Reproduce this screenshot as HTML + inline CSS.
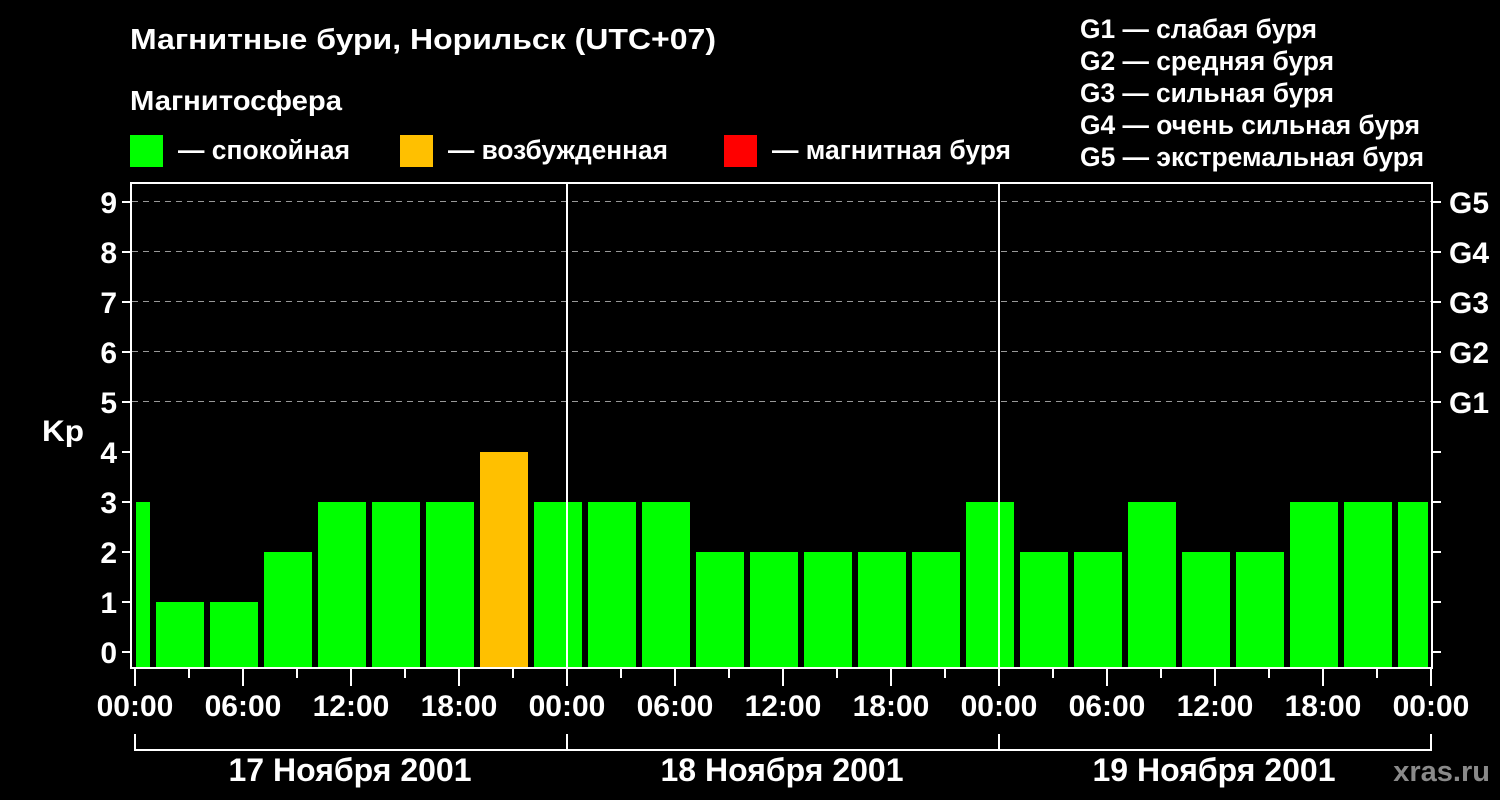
<!DOCTYPE html>
<html><head><meta charset="utf-8"><style>html,body{margin:0;padding:0;background:#000;}svg{display:block}</style></head><body>
<svg width="1500" height="800" viewBox="0 0 1500 800" xmlns="http://www.w3.org/2000/svg" font-family="Liberation Sans, Arial, sans-serif" font-weight="bold" fill="#fff">
<rect width="1500" height="800" fill="#000"/>
<text x="130" y="49" font-size="29" textLength="586" lengthAdjust="spacingAndGlyphs">Магнитные бури, Норильск (UTC+07)</text>
<text x="130" y="110" font-size="28" textLength="212" lengthAdjust="spacingAndGlyphs">Магнитосфера</text>
<rect x="130" y="135" width="33" height="32" fill="#00ff00"/>
<text x="178" y="159" font-size="27" textLength="172" lengthAdjust="spacingAndGlyphs">— спокойная</text>
<rect x="400" y="135" width="33" height="32" fill="#ffc000"/>
<text x="448" y="159" font-size="27" textLength="220" lengthAdjust="spacingAndGlyphs">— возбужденная</text>
<rect x="724" y="135" width="33" height="32" fill="#ff0000"/>
<text x="772" y="159" font-size="27" textLength="239" lengthAdjust="spacingAndGlyphs">— магнитная буря</text>
<g font-size="27">
<text x="1080" y="38" textLength="237" lengthAdjust="spacingAndGlyphs">G1 — слабая буря</text>
<text x="1080" y="70" textLength="254" lengthAdjust="spacingAndGlyphs">G2 — средняя буря</text>
<text x="1080" y="102" textLength="254" lengthAdjust="spacingAndGlyphs">G3 — сильная буря</text>
<text x="1080" y="134" textLength="340" lengthAdjust="spacingAndGlyphs">G4 — очень сильная буря</text>
<text x="1080" y="166" textLength="344" lengthAdjust="spacingAndGlyphs">G5 — экстремальная буря</text>
</g>
<g stroke="#999" stroke-width="1" stroke-dasharray="6,5">
<line x1="132" y1="201.5" x2="1431" y2="201.5"/>
<line x1="132" y1="251.5" x2="1431" y2="251.5"/>
<line x1="132" y1="301.5" x2="1431" y2="301.5"/>
<line x1="132" y1="351.5" x2="1431" y2="351.5"/>
<line x1="132" y1="401.5" x2="1431" y2="401.5"/>
</g>
<g fill="#00ff00">
<rect x="136" y="502" width="14" height="166"/>
<rect x="156" y="602" width="48" height="66"/>
<rect x="210" y="602" width="48" height="66"/>
<rect x="264" y="552" width="48" height="116"/>
<rect x="318" y="502" width="48" height="166"/>
<rect x="372" y="502" width="48" height="166"/>
<rect x="426" y="502" width="48" height="166"/>
<rect x="480" y="452" width="48" height="216" fill="#ffc000"/>
<rect x="534" y="502" width="48" height="166"/>
<rect x="588" y="502" width="48" height="166"/>
<rect x="642" y="502" width="48" height="166"/>
<rect x="696" y="552" width="48" height="116"/>
<rect x="750" y="552" width="48" height="116"/>
<rect x="804" y="552" width="48" height="116"/>
<rect x="858" y="552" width="48" height="116"/>
<rect x="912" y="552" width="48" height="116"/>
<rect x="966" y="502" width="48" height="166"/>
<rect x="1020" y="552" width="48" height="116"/>
<rect x="1074" y="552" width="48" height="116"/>
<rect x="1128" y="502" width="48" height="166"/>
<rect x="1182" y="552" width="48" height="116"/>
<rect x="1236" y="552" width="48" height="116"/>
<rect x="1290" y="502" width="48" height="166"/>
<rect x="1344" y="502" width="48" height="166"/>
<rect x="1398" y="502" width="30" height="166"/>
</g>
<g stroke="#fff" stroke-width="2" fill="none">
<rect x="131" y="183" width="1301" height="485"/>
<line x1="567" y1="183" x2="567" y2="668"/>
<line x1="999" y1="183" x2="999" y2="668"/>
<path d="M122 202H131M122 252H131M122 302H131M122 352H131M122 402H131M122 452H131M122 502H131M122 552H131M122 602H131M122 652H131"/>
<path d="M1432 202H1441M1432 252H1441M1432 302H1441M1432 352H1441M1432 402H1441M1432 452H1441M1432 502H1441M1432 552H1441M1432 602H1441M1432 652H1441"/>
<path d="M135 668V686M243 668V686M351 668V686M459 668V686M567 668V686M675 668V686M783 668V686M891 668V686M999 668V686M1107 668V686M1215 668V686M1323 668V686M1431 668V686"/>
<path d="M189 668V678M297 668V678M405 668V678M513 668V678M621 668V678M729 668V678M837 668V678M945 668V678M1053 668V678M1161 668V678M1269 668V678M1377 668V678"/>
<path d="M135 734V750H1431V734M567 734V750M999 734V750"/>
</g>
<g font-size="30" text-anchor="end">
<text x="117" y="213">9</text><text x="117" y="263">8</text><text x="117" y="313">7</text><text x="117" y="363">6</text><text x="117" y="413">5</text><text x="117" y="463">4</text><text x="117" y="513">3</text><text x="117" y="563">2</text><text x="117" y="613">1</text><text x="117" y="663">0</text>
</g>
<text x="42" y="441" font-size="30" textLength="42" lengthAdjust="spacingAndGlyphs">Kp</text>
<g font-size="30">
<text x="1449" y="213">G5</text><text x="1449" y="263">G4</text><text x="1449" y="313">G3</text><text x="1449" y="363">G2</text><text x="1449" y="413">G1</text>
</g>
<g font-size="30" text-anchor="middle">
<text x="135" y="716">00:00</text><text x="243" y="716">06:00</text><text x="351" y="716">12:00</text><text x="459" y="716">18:00</text>
<text x="567" y="716">00:00</text><text x="675" y="716">06:00</text><text x="783" y="716">12:00</text><text x="891" y="716">18:00</text>
<text x="999" y="716">00:00</text><text x="1107" y="716">06:00</text><text x="1215" y="716">12:00</text><text x="1323" y="716">18:00</text>
<text x="1431" y="716">00:00</text>
</g>
<g font-size="32" text-anchor="middle">
<text x="350" y="781">17 Ноября 2001</text><text x="782" y="781">18 Ноября 2001</text><text x="1214" y="781">19 Ноября 2001</text>
</g>
<text x="1490" y="781" font-size="29" text-anchor="end" fill="#8a8a8a">xras.ru</text>
</svg>
</body></html>
